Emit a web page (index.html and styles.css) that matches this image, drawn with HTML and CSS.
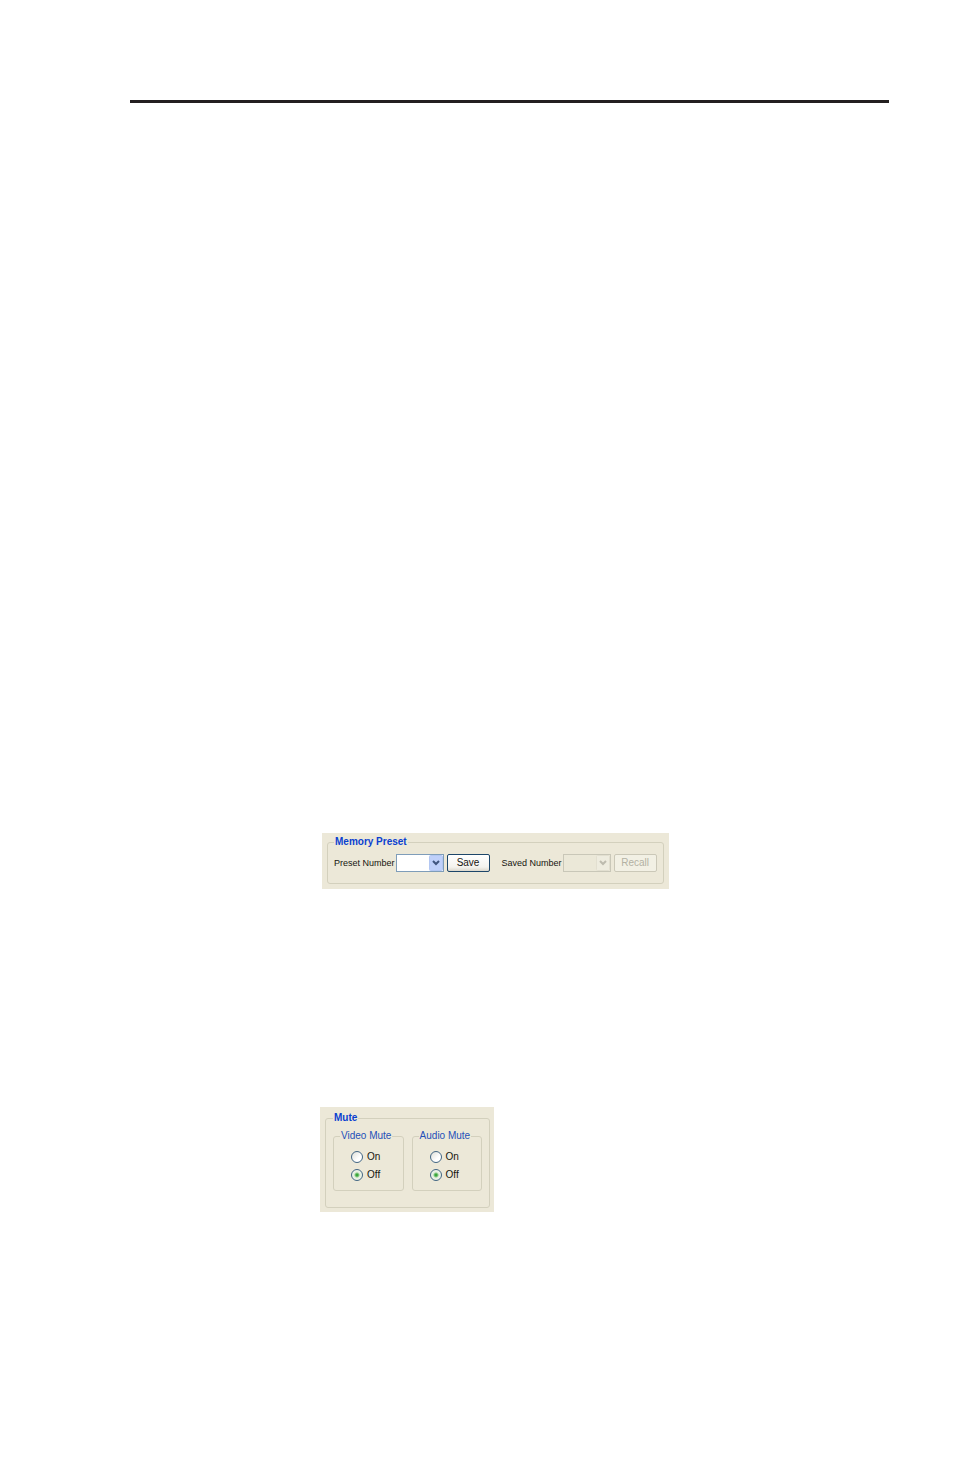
FILE: index.html
```html
<!DOCTYPE html>
<html lang="en">
<head>
<meta charset="utf-8">
<meta name="viewport" content="width=device-width, initial-scale=1">
<title>Memory Preset and Mute</title>
<link rel="stylesheet" href="styles.css">
</head>
<body>
<main class="page">
  <hr class="rule">
  <form class="panel panel-preset">
    <fieldset class="group group-preset">
      <legend class="title">Memory Preset</legend>
      <div class="controls">
        <label class="caption" for="preset">Preset Number</label>
        <span class="combo">
          <select class="combo-box" id="preset"><option></option></select>
          <svg class="combo-arrow" viewBox="0 0 14 16" aria-hidden="true"><rect class="face" x="0.5" y="0.5" width="13" height="15" rx="1"/><path class="chevron" d="M4 6l3 3 3-3"/></svg>
        </span>
        <button class="button save" type="button">Save</button>
        <label class="caption" for="saved">Saved Number</label>
        <span class="combo combo-off">
          <select class="combo-box" id="saved" disabled><option></option></select>
          <svg class="combo-arrow" viewBox="0 0 14 16" aria-hidden="true"><rect class="face" x="0.5" y="0.5" width="13" height="15" rx="1"/><path class="chevron" d="M4 6l3 3 3-3"/></svg>
        </span>
        <button class="button" type="button" disabled>Recall</button>
      </div>
    </fieldset>
  </form>
  <form class="panel panel-mute">
    <fieldset class="group group-mute">
      <legend class="title">Mute</legend>
      <div class="mutes">
        <fieldset class="group group-radio">
          <legend class="subtitle">Video Mute</legend>
          <label class="choice"><input class="radio" type="radio" name="video">On</label>
          <label class="choice"><input class="radio" type="radio" name="video" checked>Off</label>
        </fieldset>
        <fieldset class="group group-radio">
          <legend class="subtitle">Audio Mute</legend>
          <label class="choice"><input class="radio" type="radio" name="audio">On</label>
          <label class="choice"><input class="radio" type="radio" name="audio" checked>Off</label>
        </fieldset>
      </div>
    </fieldset>
  </form>
</main>
</body>
</html>
```
FILE: styles.css
```css
* { box-sizing: border-box; }

body {
  margin: 0;
  background: #fff;
  color: #16150f;
  font: 10px/12px "Liberation Sans", Arial, sans-serif;
}

.page {
  min-height: 100vh;
  padding: 100px 65px 0 130px;
}

.rule {
  height: 3px;
  margin: 0;
  border: 0;
  background: #231f20;
}

.panel {
  width: fit-content;
  background: #ece8d8;
}

.panel-preset {
  margin: 730px 0 0 192px;
  padding: 3px 5px 5px;
}

.panel-mute {
  margin: 218px 0 0 190px;
  padding: 5px 4px 4px 5px;
}

.group {
  min-width: 0;
  margin: 0;
  border: 1px solid #d3d0bd;
  border-radius: 3px;
}

.group-preset { padding: 6px 6px 11px; }
.group-mute { padding: 6px 7px 16px; }
.group-radio { padding: 6px 10px 6px 6px; }

.title, .subtitle { padding: 0 1px; }

.title {
  color: #0a3fd0;
  font-weight: bold;
}

.subtitle { color: #2450b8; }

.controls {
  display: flex;
  align-items: center;
}

.caption {
  margin-right: 1px;
  font-size: 9px;
  white-space: nowrap;
}

.combo {
  display: grid;
  width: 48px;
  margin-right: 3px;
}

.combo-box, .combo-arrow { grid-area: 1 / 1; }

.combo-box {
  appearance: none;
  width: 100%;
  height: 18px;
  padding: 0 16px 0 3px;
  border: 1px solid #7f9db9;
  border-radius: 0;
  background: #fff;
  font: inherit;
}

.combo-arrow {
  z-index: 1;
  place-self: center end;
  width: 14px;
  height: 16px;
  margin-right: 1px;
  pointer-events: none;
}

.face {
  fill: #bfd0fa;
  stroke: #b3c7f2;
}

.chevron {
  fill: none;
  stroke: #40557f;
  stroke-width: 2;
}

.combo-off .combo-box {
  border-color: #c9c7b8;
  background: #ebe8d8;
  opacity: 1;
}

.combo-off .face {
  fill: #eeecdf;
  stroke: #e2dfd0;
}

.combo-off .chevron { stroke: #bdbbae; }

.button {
  width: 43px;
  height: 18px;
  padding: 0;
  border: 1px solid #cbc8b8;
  border-radius: 2px;
  background: #f2f0e4;
  color: inherit;
  font: inherit;
}

.button:disabled { color: #b3b1a3; }

.save {
  margin-right: 12px;
  border-color: #1d4669;
  background: linear-gradient(#fff, #f4f3ee 75%, #dcd8cc);
}

.mutes {
  display: grid;
  grid-template-columns: 1fr 1fr;
  gap: 8px;
}

.choice {
  display: flex;
  align-items: center;
  gap: 4px;
  height: 18px;
  padding-left: 11px;
}

.radio {
  appearance: none;
  width: 12px;
  height: 12px;
  margin: 0;
  border: 1px solid #416583;
  border-radius: 50%;
  background: linear-gradient(135deg, #dedfd8, #fff 65%);
}

.radio:checked {
  background: radial-gradient(circle, #3aa83a 0 1px, #e5efdf 3px, #fafaf4);
}
```
